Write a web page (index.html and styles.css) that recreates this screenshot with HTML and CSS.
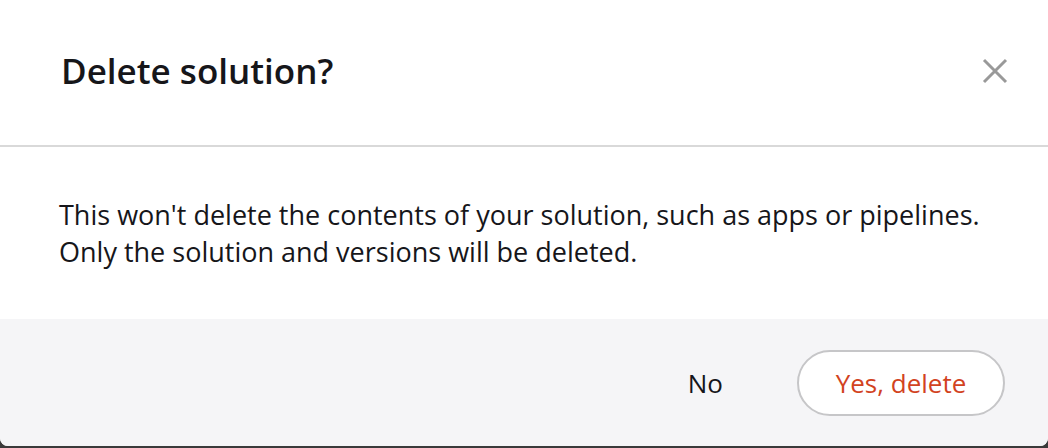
FILE: index.html
```html
<!DOCTYPE html>
<html lang="en">
<head>
<meta charset="utf-8">
<link rel="stylesheet" href="styles.css">
</head>
<body>
<div class="modal">
  <header class="modal-header">
    <h1 class="modal-title">Delete solution?</h1>
    <button class="close-btn" aria-label="Close">
      <svg width="26" height="26" viewBox="0 0 26 26"><path d="M2 2 L24 24 M24 2 L2 24" stroke="#999999" stroke-width="3" fill="none"/></svg>
    </button>
  </header>
  <div class="modal-body">
    <p class="modal-text">This won't delete the contents of your solution, such as apps or pipelines.<br>Only the solution and versions will be deleted.</p>
  </div>
  <footer class="modal-footer">
    <button class="btn-no">No</button>
    <button class="btn-yes">Yes, delete</button>
  </footer>
</div>
</body>
</html>
```
FILE: styles.css
```css
html, body {
  margin: 0;
  padding: 0;
}
body {
  width: 1048px;
  height: 448px;
  background: #3a3a3a;
  font-family: "Open Sans", "Noto Sans", sans-serif;
  overflow: hidden;
}
.modal {
  width: 1048px;
  height: 446px;
  background: #ffffff;
  border-radius: 0 0 8px 8px;
  display: flex;
  flex-direction: column;
  overflow: hidden;
}
.modal-header {
  height: 145px;
  border-bottom: 2px solid #d9d9d9;
  display: flex;
  align-items: center;
  justify-content: space-between;
  padding: 0 40px 0 61px;
  box-sizing: content-box;
}
.modal-title {
  margin: 0;
  font-size: 35px;
  font-weight: 600;
  color: #16161a;
  margin-top: -4px;
}
.close-btn {
  background: none;
  border: 0;
  padding: 0;
  width: 26px;
  height: 26px;
  margin-top: -4px;
  cursor: pointer;
}
.close-btn svg {
  display: block;
}
.modal-body {
  height: 172px;
  padding: 0 59px;
  display: flex;
  align-items: center;
}
.modal-text {
  margin: 0;
  font-size: 27px;
  line-height: 37px;
  color: #16161a;
}
.modal-footer {
  flex: 1;
  background: #f5f5f7;
  display: flex;
  align-items: center;
  justify-content: flex-end;
  padding: 0 43px 0 0;
  gap: 74px;
}
.btn-no {
  background: none;
  border: 0;
  padding: 0;
  font-family: inherit;
  font-size: 26px;
  color: #16161a;
  cursor: pointer;
}
.btn-yes {
  width: 208px;
  height: 66px;
  border: 2px solid #c6c6c8;
  border-radius: 33px;
  background: #ffffff;
  font-family: inherit;
  font-size: 26px;
  color: #d2431f;
  cursor: pointer;
}
```
